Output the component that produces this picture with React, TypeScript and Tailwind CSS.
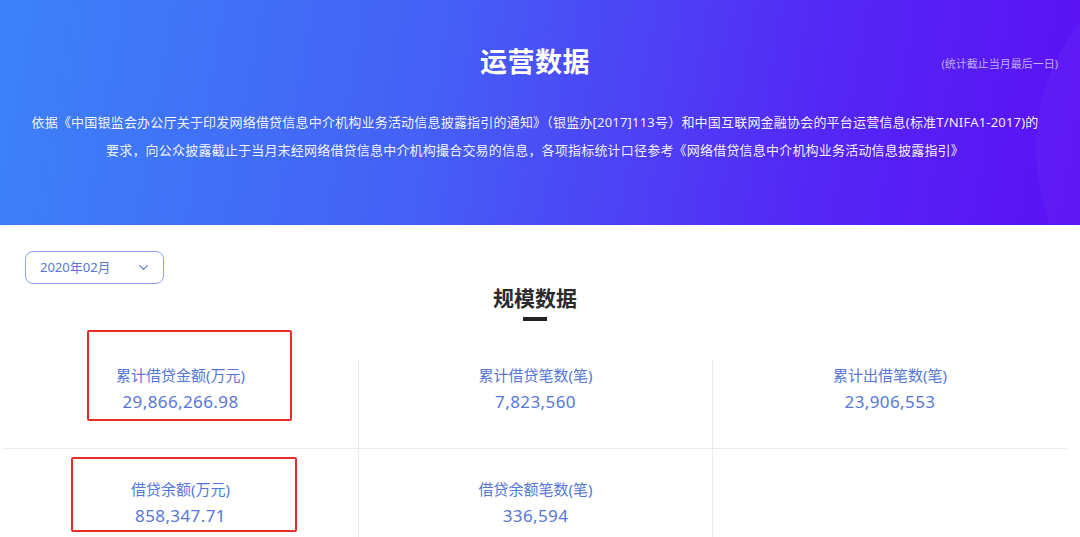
import React from 'react';
import { ChevronDown } from 'lucide-react';

const font = { fontFamily: '"Noto Sans", "Noto Sans CJK SC", sans-serif' };

interface StatProps {
  label: string;
  value: string;
  first?: boolean;
  row: 1 | 2;
  highlight?: 'a' | 'b';
}

const Stat: React.FC<StatProps> = ({ label, value, first, row, highlight }) => {
  return (
    <div
      className={`relative flex flex-col items-center ${row === 1 ? 'h-[88px] pt-[4px]' : 'h-[90px] pt-[29px]'} ${first ? '' : 'border-l border-[#ececec]'}`}
    >
      <div className="text-[15px] leading-[22px] text-[#5677d8]">{label}</div>
      <div className="mt-[4px] text-[17px] leading-[24px] tracking-[0.4px] text-[#5677d8]">{value}</div>
      {highlight === 'a' && (
        <div className="absolute left-[84px] top-[-30px] w-[205px] h-[91px] border-2 border-[#e52e2b] rounded-[2px]" />
      )}
      {highlight === 'b' && (
        <div className="absolute left-[68px] top-[8px] w-[226px] h-[75px] border-2 border-[#e52e2b] rounded-[2px]" />
      )}
    </div>
  );
};

const App: React.FC = () => {
  return (
    <div className="w-[1080px] h-[537px] overflow-hidden bg-white" style={font}>
      {/* header */}
      <div className="relative h-[225px] overflow-hidden bg-[linear-gradient(100deg,#3c82f8_0%,#4560f6_40%,#5427f5_75%,#5b10f4_100%)]">
        <div className="absolute left-[1036px] top-[-60px] w-[420px] h-[420px] rounded-full bg-white/[0.03]" />
        <div className="relative w-[1070px] pt-[42px] text-center">
          <h1 className="text-[27px] leading-[40px] font-bold text-white tracking-[0.5px]">运营数据</h1>
          <div className="absolute right-[12px] top-[56px] text-[11px] leading-[16px] text-[#bfaefa]">(统计截止当月最后一日)</div>
          <p className="mt-[26px] text-[13px] leading-[28px] tracking-[0.2px] text-white/95">
            依据《中国银监会办公厅关于印发网络借贷信息中介机构业务活动信息披露指引的通知》（银监办[2017]113号）和中国互联网金融协会的平台运营信息(标准T/NIFA1-2017)的
            <br />
            要求，向公众披露截止于当月末经网络借贷信息中介机构撮合交易的信息，各项指标统计口径参考《网络借贷信息中介机构业务活动信息披露指引》
          </p>
        </div>
      </div>

      {/* body */}
      <div className="w-[1070px]">
        <div className="pl-[25px] pt-[26px]">
          <button className="flex items-center justify-between w-[139px] h-[33px] pl-[14px] pr-[12px] border border-[#86a3ef] rounded-[8px] text-[13px] text-[#5677d8]">
            <span>2020年02月</span>
            <ChevronDown size={15} strokeWidth={2} className="text-[#5b7bd5]" />
          </button>
        </div>
        <div className="flex flex-col items-center">
          <h2 className="text-[21px] leading-[28px] font-bold text-[#2b2b2b]">规模数据</h2>
          <div className="mt-[5px] w-[24px] h-[4px] bg-[#222]" />
        </div>
        <div className="mt-[39px] ml-[3px] w-[1064px] grid grid-cols-[355px_354px_355px]">
          <Stat row={1} first label="累计借贷金额(万元)" value="29,866,266.98" highlight="a" />
          <Stat row={1} label="累计借贷笔数(笔)" value="7,823,560" />
          <Stat row={1} label="累计出借笔数(笔)" value="23,906,553" />
          <div className="col-span-3 h-px bg-[#ececec]" />
          <Stat row={2} first label="借贷余额(万元)" value="858,347.71" highlight="b" />
          <Stat row={2} label="借贷余额笔数(笔)" value="336,594" />
          <div className="border-l border-[#ececec] h-[90px]" />
        </div>
      </div>
    </div>
  );
};

export default App;
